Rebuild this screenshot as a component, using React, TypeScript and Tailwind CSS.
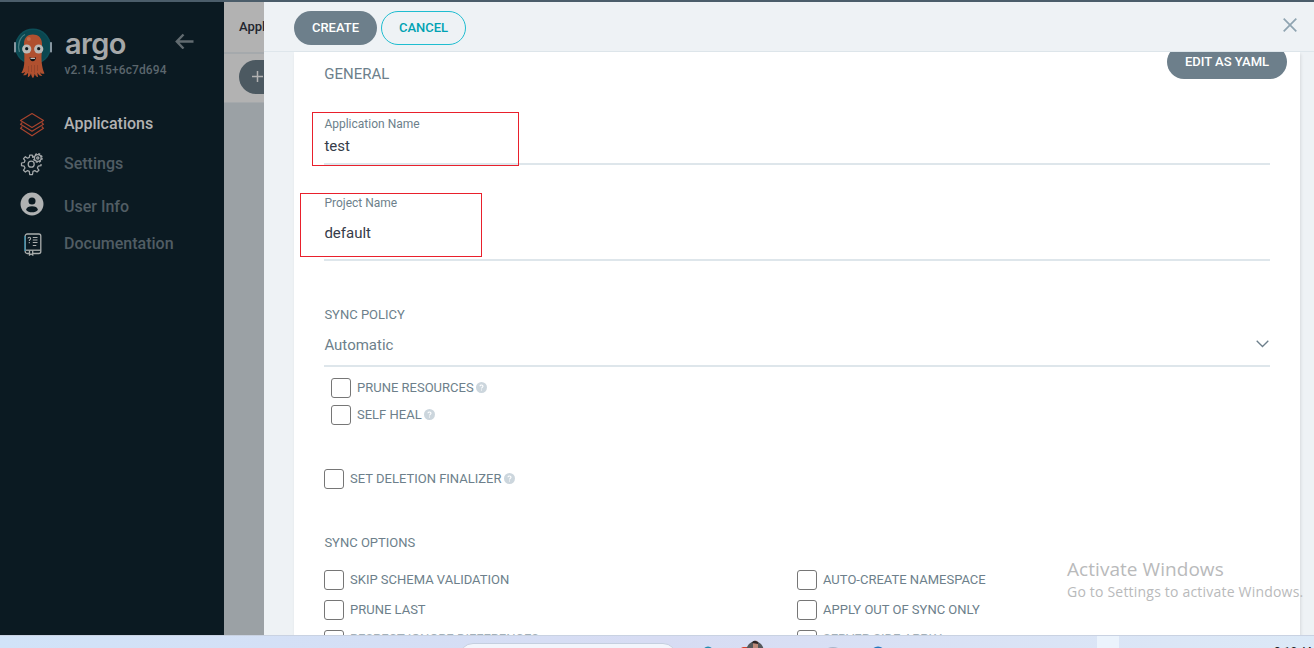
import React from 'react';

function ArgoMascot() {
  return (
    <svg width="40" height="54" viewBox="0 0 40 54" className="block shrink-0">
      <circle cx="20" cy="20.500" r="18" fill="#0d4e58" />
      <circle cx="20" cy="20.500" r="16.500" fill="#0a4750" />
      <rect x="1" y="16" width="2" height="10.500" rx=".8" fill="#8796a0" />
      <rect x="37" y="16" width="2" height="10.500" rx=".8" fill="#8796a0" />
      <path d="M6.500 26C4 19 7 11 12 8.500" fill="none" stroke="#467b80" strokeWidth="1.300" />
      <path
        d="M11 18C11 11.500 14.500 8.500 19.800 8.500S29 11.500 29 18c0 7-.8 12-.4 17.500.4 5 1.900 10 2.900 12-1.500.8-3.500.3-4.700-1.500.8 2 1.700 3.300 2.500 4-2 .4-3.800-.8-4.800-3.500 0 2.300.3 3.700.7 4.700-2-.2-3-1.700-3.400-3.700-.3 2-.9 3.400-1.800 4.700-1.200-1.300-1.800-3-2-5-.6 2-1.400 3.500-3.200 4 .1-1.500.2-3 .3-4.500-1.200 1.900-2.800 2.900-5 2.500 1-1 1.700-2.200 2.200-3.500-1.300 1.200-2.800 1.700-4 1.300 2-3 3-7.500 3-11.500C11.600 30 11 25 11 18z"
        fill="#b0502f"
      />
      <path d="M15.500 40v6M18.500 39v7M21.500 39v8M24.500 39v6" stroke="#8a4028" strokeWidth=".6" fill="none" />
      <circle cx="15.800" cy="13" r="2" fill="#c06a4b" />
      <circle cx="13.700" cy="23" r="4.600" fill="#b9b9b7" />
      <circle cx="25.700" cy="23" r="4.600" fill="#b9b9b7" />
      <circle cx="13.700" cy="22.700" r="1.600" fill="#101a20" />
      <circle cx="25.700" cy="22.700" r="1.600" fill="#101a20" />
      <path d="M16.500 31.300c2 1 4.500 1 6.500 0-.3 2.700-1.500 4-3.200 4S16.800 34 16.500 31.300z" fill="#101416" />
      <path d="M17.500 31.900h4.500v1h-4.500z" fill="#cfd2d2" />
    </svg>
  );
}

function StackIcon() {
  return (
    <svg width="26" height="26" viewBox="0 0 26 26" className="mt-px" fill="none" stroke="#a8442e" strokeWidth="1.200" strokeLinejoin="round">
      <path d="M13 1.500 24.500 8.500 13 15.500 1.500 8.500z" />
      <path d="M3.300 10.500 1.500 12.300 13 19.300 24.500 12.300 22.700 10.500" />
      <path d="M3.300 14.500 1.500 16.300 13 23.800 24.500 16.300 22.700 14.500" />
    </svg>
  );
}

function GearsIcon() {
  return (
    <svg width="24" height="24" viewBox="0 0 24 24" className="block" fill="none" stroke="#a5a9ab" strokeWidth="1.250" strokeLinejoin="round">
      <path d="M13.500 5.600 12.700 5.400 12.300 3H9.700L9.300 5.400 7.500 6.200 5.400 4.700 3.500 6.600 5 8.700 4.200 10.500 1.500 11V13.700L4.200 14.200 5 16 3.500 18.200 5.400 20 7.500 18.600 9.300 19.400 9.700 22.500H12.500L13 19.400 14.800 18.600 17 20 18.900 18.200 17.400 16 18.200 14.200 21 13.700V12" />
      <circle cx="11.200" cy="12.200" r="3" />
      <circle cx="17.800" cy="6" r="4.200" strokeWidth="1.500" strokeDasharray="1.900 1.400" />
      <circle cx="17.800" cy="6" r="3.300" />
      <circle cx="17.800" cy="6" r="1.100" />
    </svg>
  );
}

function UserIcon() {
  return (
    <svg width="24" height="24" viewBox="0 0 23 23">
      <circle cx="11.500" cy="11.500" r="11" fill="#b0b2b3" />
      <circle cx="11.500" cy="8.600" r="3.400" fill="#0b1a22" />
      <path d="M5.800 17c.5-2.300 2.700-3.300 5.700-3.300s5.200 1 5.700 3.300c-1.200 1.700-3.400 2.500-5.700 2.500S7 18.700 5.800 17z" fill="#0b1a22" />
    </svg>
  );
}

function DocIcon() {
  return (
    <svg width="18" height="23" viewBox="0 0 18 23" className="mt-px ml-px" fill="none" stroke="#abaead" strokeWidth="1.300">
      <path d="M6 20.500H3.200a2 2 0 0 1-2-2V3a2 2 0 0 1 2-2h11.600a2 2 0 0 1 2 2v15.500a2 2 0 0 1-2 2H9" />
      <path d="M2 17.200h14.500" />
      <path d="M.8 3v15" stroke="#2c87a8" strokeWidth="1.200" />
      <path d="M5.500 17.500v4.500l1.600-1 1.600 1v-4.500" />
      <path d="M4 5.500c0-1.600 2.600-1.600 2.600 0 0 1.200-1.300 1-1.300 2.500M5.300 9v1.200M8.800 4.500h4.700M8.800 7h4.700M8.800 9.500h4.700M8.800 12.500h3.500" strokeWidth="1.100" />
    </svg>
  );
}

function HelpDot() {
  return (
    <svg width="11" height="11" viewBox="0 0 11 11" className="mb-px ml-[2.500px] block">
      <circle cx="5.500" cy="5.500" r="5.500" fill="#ccd6dd" />
      <path d="M4 4.300c0-1.800 3-1.800 3 0 0 1-1.500 1.100-1.500 2.200M5.500 7.400v1.100" stroke="#fff" strokeWidth="1.100" fill="none" />
    </svg>
  );
}

function Check({ label, help = false, raised = false }: { label: string; help?: boolean; raised?: boolean }) {
  return (
    <div className="flex h-5 items-center whitespace-nowrap">
      <span className="mr-1.5 block size-5 shrink-0 rounded-[3px] border border-[#767676] bg-white" />
      <span className={raised ? 'mb-0.5 text-[13px] leading-5 text-[#a3b0b9]' : 'text-[13px] leading-5'}>{label}</span>
      {help && <HelpDot />}
    </div>
  );
}

function NavItem({ icon, label, active = false }: { icon: React.ReactNode; label: string; active?: boolean }) {
  return (
    <div className="flex h-6 items-center">
      <div className="flex w-16 shrink-0 justify-center">{icon}</div>
      <span className={active ? 'font-medium text-[#b2b2b2]' : 'font-medium text-[#515d64]'}>{label}</span>
    </div>
  );
}

function Sidebar() {
  return (
    <aside className="w-56 shrink-0 bg-[#0b1a22] text-base leading-6">
      <div className="flex h-[107px] pt-[24px]">
        <div className="ml-[13px] w-[51px]">
          <ArgoMascot />
        </div>
        <div className="w-[111px] pt-px">
          <div className="h-[34px] pl-px font-['Inter',sans-serif] text-[29px] leading-[34px] font-semibold tracking-[-0.6px] text-[#a6a8a9]">argo</div>
          <div className="pl-[0.500px] text-xs leading-[18px] font-medium tracking-[0.1px] whitespace-nowrap text-[#5b666d]">v2.14.15+6c7d694</div>
        </div>
        <svg width="19" height="16" viewBox="0 0 19 16" className="mt-[7px]" fill="none" stroke="#626b70" strokeWidth="2.400">
          <path d="M18.500 8.500H2M8.500 1.500 1.800 8.500l6.700 7" />
        </svg>
      </div>
      <nav className="pt-[3px]">
        <NavItem icon={<StackIcon />} label="Applications" active />
        <div className="h-4" />
        <NavItem icon={<GearsIcon />} label="Settings" />
        <div className="h-[19px]" />
        <NavItem icon={<div className="-mt-1.5"><UserIcon /></div>} label="User Info" />
        <div className="h-[13px]" />
        <NavItem icon={<DocIcon />} label="Documentation" />
      </nav>
    </aside>
  );
}

function Form() {
  return (
    <section className="ml-[30px] h-[583px] w-[1006px] overflow-hidden bg-white pr-[30px] pl-[30px] text-[#6d7f8b] shadow-[1px_2px_3px_rgba(0,0,0,0.1)]">
      <div className="flex h-[60px] justify-between">
        <h2 className="pt-3 pl-[0.300px] text-[15px] leading-5">GENERAL</h2>
        <button className="-mt-[7px] -mr-[17px] h-[34px] w-[120px] rounded-full bg-[#6d7f8b] text-[13px] font-medium text-white">EDIT AS YAML</button>
      </div>
      <div className="relative h-[53px] border-b-2 border-[#dee6eb] pt-1 pl-[0.4px]">
        <label className="block text-xs leading-4">Application Name</label>
        <div className="mt-1 text-[15px] leading-5 text-[#363c4a]">test</div>
        <div className="absolute top-0 -left-3 h-[54px] w-[207px] border border-[#e9202c]" />
      </div>
      <div className="relative mt-7 h-[68px] border-b-2 border-[#dee6eb] pt-0.5 pl-[0.4px]">
        <label className="block text-xs leading-4">Project Name</label>
        <div className="mt-3 text-[15px] leading-5 text-[#363c4a]">default</div>
        <div className="absolute top-0 -left-6 h-16 w-[182px] border border-[#e9202c]" />
      </div>
      <div className="mt-11 pl-[0.4px] text-[13px] leading-5">SYNC POLICY</div>
      <div className="flex h-[42px] items-start justify-between border-b-2 border-[#dee6eb] pt-2.5 pr-px pl-[0.4px]">
        <span className="text-[15px] leading-5">Automatic</span>
        <svg width="13" height="8" viewBox="0 0 13 8" className="mt-[5px]" fill="none" stroke="#6d7f8b" strokeWidth="1.300">
          <path d="m.7.7 5.800 5.800L12.300.7" />
        </svg>
      </div>
      <div className="mt-[11px] ml-[7px] flex flex-col gap-[7px]">
        <Check label="PRUNE RESOURCES" help />
        <Check label="SELF HEAL" help />
      </div>
      <div className="mt-11">
        <Check label="SET DELETION FINALIZER" help />
      </div>
      <div className="mt-11 pl-[0.4px] text-[13px] leading-5">SYNC OPTIONS</div>
      <div className="mt-[17px] grid grid-cols-2 gap-y-2.5">
        <Check label="SKIP SCHEMA VALIDATION" />
        <Check label="AUTO-CREATE NAMESPACE" />
        <Check label="PRUNE LAST" />
        <Check label="APPLY OUT OF SYNC ONLY" />
        <Check label="RESPECT IGNORE DIFFERENCES" raised />
        <Check label="SERVER-SIDE APPLY" raised />
      </div>
    </section>
  );
}

function Taskbar() {
  return (
    <footer className="flex h-[13px] shrink-0 overflow-hidden border-t border-[#c9d2e2] bg-linear-to-r from-[#d1e3f8] via-[#d7dcf3] to-[#dce9f7]">
      <div className="mt-[7px] ml-[459px] h-8 w-[218px] shrink-0 rounded-[14px] border border-[#c5cfdf] bg-[#f2f5fc]" />
      <svg width="210" height="12" viewBox="0 0 210 12" className="ml-[23px] block shrink-0">
        <circle cx="8" cy="16" r="5.500" fill="#238cb1" />
        <path d="M41 12l2-1h6v1z" fill="#d44431" />
        <circle cx="55" cy="14" r="8.500" fill="#55585b" />
        <path d="M53 12V6q3-3 5 0v6z" fill="#bd8a79" />
        <path d="M52 7q1-4 6-1v2z" fill="#2b2526" />
        <path d="M128 12q5-2 10 0z" fill="#aab4c8" />
        <circle cx="178" cy="18" r="7.500" fill="#2377bd" />
      </svg>
      <div className="ml-[187px] h-full w-[22px] shrink-0 bg-[#ebf3fc]" />
      <div className="ml-[155px] h-full w-10 shrink-0 pt-2 text-xs leading-4 whitespace-nowrap text-[#1b1b1b]">3:10 AM</div>
    </footer>
  );
}

export default function App() {
  return (
    <div className="relative flex h-[648px] w-[1314px] flex-col overflow-hidden bg-[#eef2f5] font-['Roboto',sans-serif]">
      <div className="h-0.5 shrink-0 bg-[#4b5d6a]" />
      <div className="flex h-[633px] shrink-0 overflow-hidden">
        <Sidebar />
        <div className="w-10 shrink-0 overflow-hidden bg-[#9ba1a5]">
          <div className="h-[52px] border-b-2 border-[#a5a9ac] bg-[#b2b2b2] pt-[15px] pl-[15px] text-[13px] leading-5 font-medium whitespace-nowrap text-[#22262f]">Applications</div>
          <div className="h-[49px] border-b border-[#a5a9ac] bg-[#b2b2b2] pt-1.5 pl-[15px]">
            <div className="flex h-[34px] w-24 items-center rounded-full bg-[#4c5961] pl-[13px]">
              <svg width="11" height="11" viewBox="0 0 11 11" className="-mt-px" stroke="#b2b2b2" strokeWidth="1.500">
                <path d="M5.500 0v11M0 5.500h11" />
              </svg>
            </div>
          </div>
        </div>
        <main className="w-[1050px] shrink-0 overflow-hidden">
          <header className="flex h-[50px] border-b border-[#dee6eb] pt-[9px] pl-[30px]">
            <button className="h-[34px] w-[83px] rounded-full bg-[#6d7f8b] text-[13px] font-medium text-white">CREATE</button>
            <button className="ml-1 h-[34px] w-[85px] rounded-full border border-[#1fbdd0] text-[13px] font-medium text-[#00a2b3]">CANCEL</button>
            <svg width="14" height="14" viewBox="0 0 14 14" className="mt-[7px] ml-[817px]" stroke="#8fa4b1" strokeWidth="1.700">
              <path d="m.7.7 12.600 12.600M13.300.7.7 13.300" />
            </svg>
          </header>
          <Form />
        </main>
      </div>
      <Taskbar />
      <div className="absolute top-[556px] left-[1067px] font-['Open_Sans',sans-serif] whitespace-nowrap text-[#b9babb]">
        <div className="text-[19px] leading-[26px] tracking-[0.05px]">Activate Windows</div>
        <div className="text-sm leading-5 tracking-[0.2px]">Go to Settings to activate Windows.</div>
      </div>
    </div>
  );
}
